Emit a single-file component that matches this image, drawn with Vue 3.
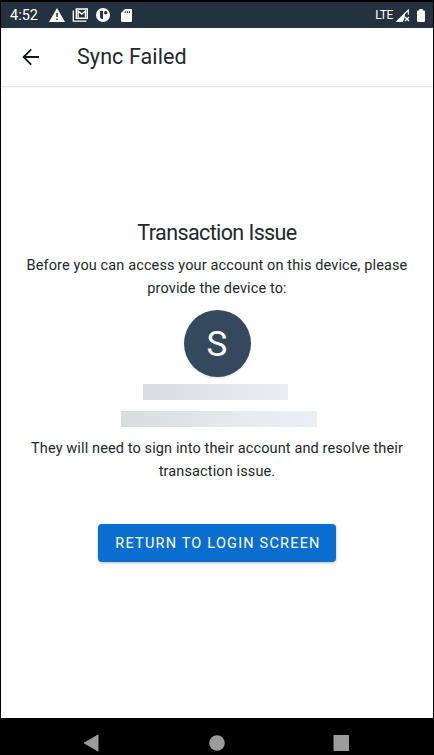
<script setup>
const message = ['Before you can access your account on this device, please', 'provide the device to:']
const resolution = ['They will need to sign into their account and resolve their', 'transaction issue.']
</script>

<template>
  <div class="device">
    <div class="status">
      <span class="clock">4:52</span>
      <svg class="warning" viewBox="0 0 16 14"><path d="M8 0 16 14H0Z" fill="#fff" /><path d="M8 5v4M8 10.5v1.6" stroke="#26323f" stroke-width="1.5" /></svg>
      <svg class="mail" viewBox="0 0 16 14"><path d="M.8 2.5v10.7H14" fill="none" stroke="#fff" stroke-width="1.3" /><path d="M3.8 10.3V1h11v9.3Z" fill="none" stroke="#fff" stroke-width="1.4" /><path d="M5.6 9.5V3l3.7 3L13 3v6.5" fill="none" stroke="#fff" stroke-width="1.4" /></svg>
      <svg class="pocket" viewBox="0 0 14 14"><circle cx="7" cy="7" r="7" fill="#fff" /><path d="M4 3h3v8.2q-3-.3-3-3Z" fill="#26323f" /><circle cx="9.7" cy="4.7" r="1.7" fill="#26323f" /></svg>
      <svg class="card" viewBox="0 0 11 13"><path d="M4 0h6q1 0 1 1v11q0 1-1 1H1q-1 0-1-1V4Z" fill="#fff" /><path d="M4.2 2v2M6.3 2v2M8.4 2v2" stroke="#26323f" stroke-width="1" /></svg>
      <span class="network">LTE</span>
      <svg class="signal" viewBox="0 0 14 13"><path d="M12.3 5.8V1L1 12.3h6" fill="none" stroke="#fff" stroke-width="1.1" /><path d="M8.8 4.5V8L7 12.6H.5Z" fill="#fff" /><path d="m9 8 4 4M13 8l-4 4" stroke="#fff" stroke-width="1.4" /></svg>
      <svg class="battery" viewBox="0 0 8 13"><path d="M2.3 0h3.4v1.4H7q1 0 1 1V12q0 1-1 1H1q-1 0-1-1V2.4q0-1 1-1h1.3Z" fill="#fff" /></svg>
    </div>
    <header class="appbar">
      <svg class="back" viewBox="0 0 18 18"><path d="M17 9H1.8M9.2 1.4 1.6 9l7.6 7.6" fill="none" stroke="#16191c" stroke-width="1.8" /></svg>
      <h1 class="title">Sync Failed</h1>
    </header>
    <main class="content">
      <h2 class="heading">Transaction Issue</h2>
      <p class="copy message"><span v-for="line in message" :key="line">{{ line }}</span></p>
      <div class="avatar">S</div>
      <div class="name"></div>
      <div class="email"></div>
      <p class="copy resolution"><span v-for="line in resolution" :key="line">{{ line }}</span></p>
      <button class="action">RETURN TO LOGIN SCREEN</button>
    </main>
    <nav class="navigation">
      <svg viewBox="0 0 18 18"><path d="M1.2 9 15 1v16Z" fill="#9b9b9b" stroke="#9b9b9b" stroke-linejoin="round" /></svg>
      <svg viewBox="0 0 18 18"><circle cx="9" cy="9" r="7.8" fill="#9b9b9b" /></svg>
      <svg viewBox="0 0 18 18"><rect x=".5" y="1" width="15.5" height="16" rx=".6" fill="#9b9b9b" /></svg>
    </nav>
  </div>
</template>

<style>
body { margin: 0; background: #000; }
</style>

<style scoped>
.device { box-sizing: border-box; width: 434px; height: 755px; padding: 2px 1px 0; background: #000; font-family: Roboto, sans-serif; color: #22282e; display: flex; flex-direction: column; overflow: hidden; }
.status { height: 26px; flex: none; background: #243240; color: #fff; display: flex; align-items: center; }
svg { display: block; flex: none; }
.clock { font-size: 14.5px; margin-left: 9px; width: 39px; }
.warning { width: 16px; height: 14px; }
.mail { width: 17px; height: 14px; margin-left: 7px; }
.pocket { width: 14px; height: 14px; margin-left: 7px; }
.card { width: 11px; height: 13px; margin-left: 11px; }
.network { margin-left: auto; font-size: 12px; letter-spacing: -.4px; }
.signal { width: 14px; height: 13px; margin-left: 3px; }
.battery { width: 8px; height: 13px; margin: 0 8px 0 7px; }
.appbar { height: 58px; flex: none; background: #fff; display: flex; align-items: center; border-bottom: 1px solid #e5e5e5; box-sizing: content-box; box-shadow: 0 1px 2px #0000000d; z-index: 1; }
.back { width: 18px; height: 18px; margin-left: 21px; }
.title { margin: 0 0 0 37px; font-size: 21.5px; font-weight: 400; line-height: 28px; letter-spacing: .1px; }
.content { height: 631px; flex: none; box-sizing: border-box; padding-top: 130px; background: #fff; display: flex; flex-direction: column; align-items: center; }
.heading { margin: 0; font-size: 21.5px; font-weight: 400; line-height: 32px; letter-spacing: -.6px; }
.copy { margin: 0; display: flex; flex-direction: column; align-items: center; font-size: 14.5px; line-height: 23px; letter-spacing: .12px; white-space: nowrap; }
.message { margin-top: 5px; }
.avatar { width: 67px; height: 67px; border-radius: 50%; background: #34495e; color: #fff; font-size: 35px; line-height: 69px; text-align: center; margin-top: 10px; box-shadow: 0 1px 2px #0002; }
.name { width: 145px; height: 16px; margin: 7px 3px 0 0; background: linear-gradient(100deg, #d8dcdf, #e9eff4); }
.email { width: 196px; height: 16px; margin: 11px 0 0 3px; background: linear-gradient(100deg, #d8dcdf, #e7edf2 73%, #e9eff4); }
.resolution { margin-top: 10px; }
.action { width: 238px; height: 38px; margin-top: 41px; padding: 0 0 0 2px; border: 0; border-radius: 4px; background: #0a6ed1; color: #fff; font-family: inherit; font-size: 14.5px; letter-spacing: 1.2px; box-shadow: 0 1px 3px #0004; }
.navigation { display: flex; flex: 1; justify-content: space-between; padding: 16px 82px 0; }
.navigation svg { width: 18px; height: 18px; }
</style>
